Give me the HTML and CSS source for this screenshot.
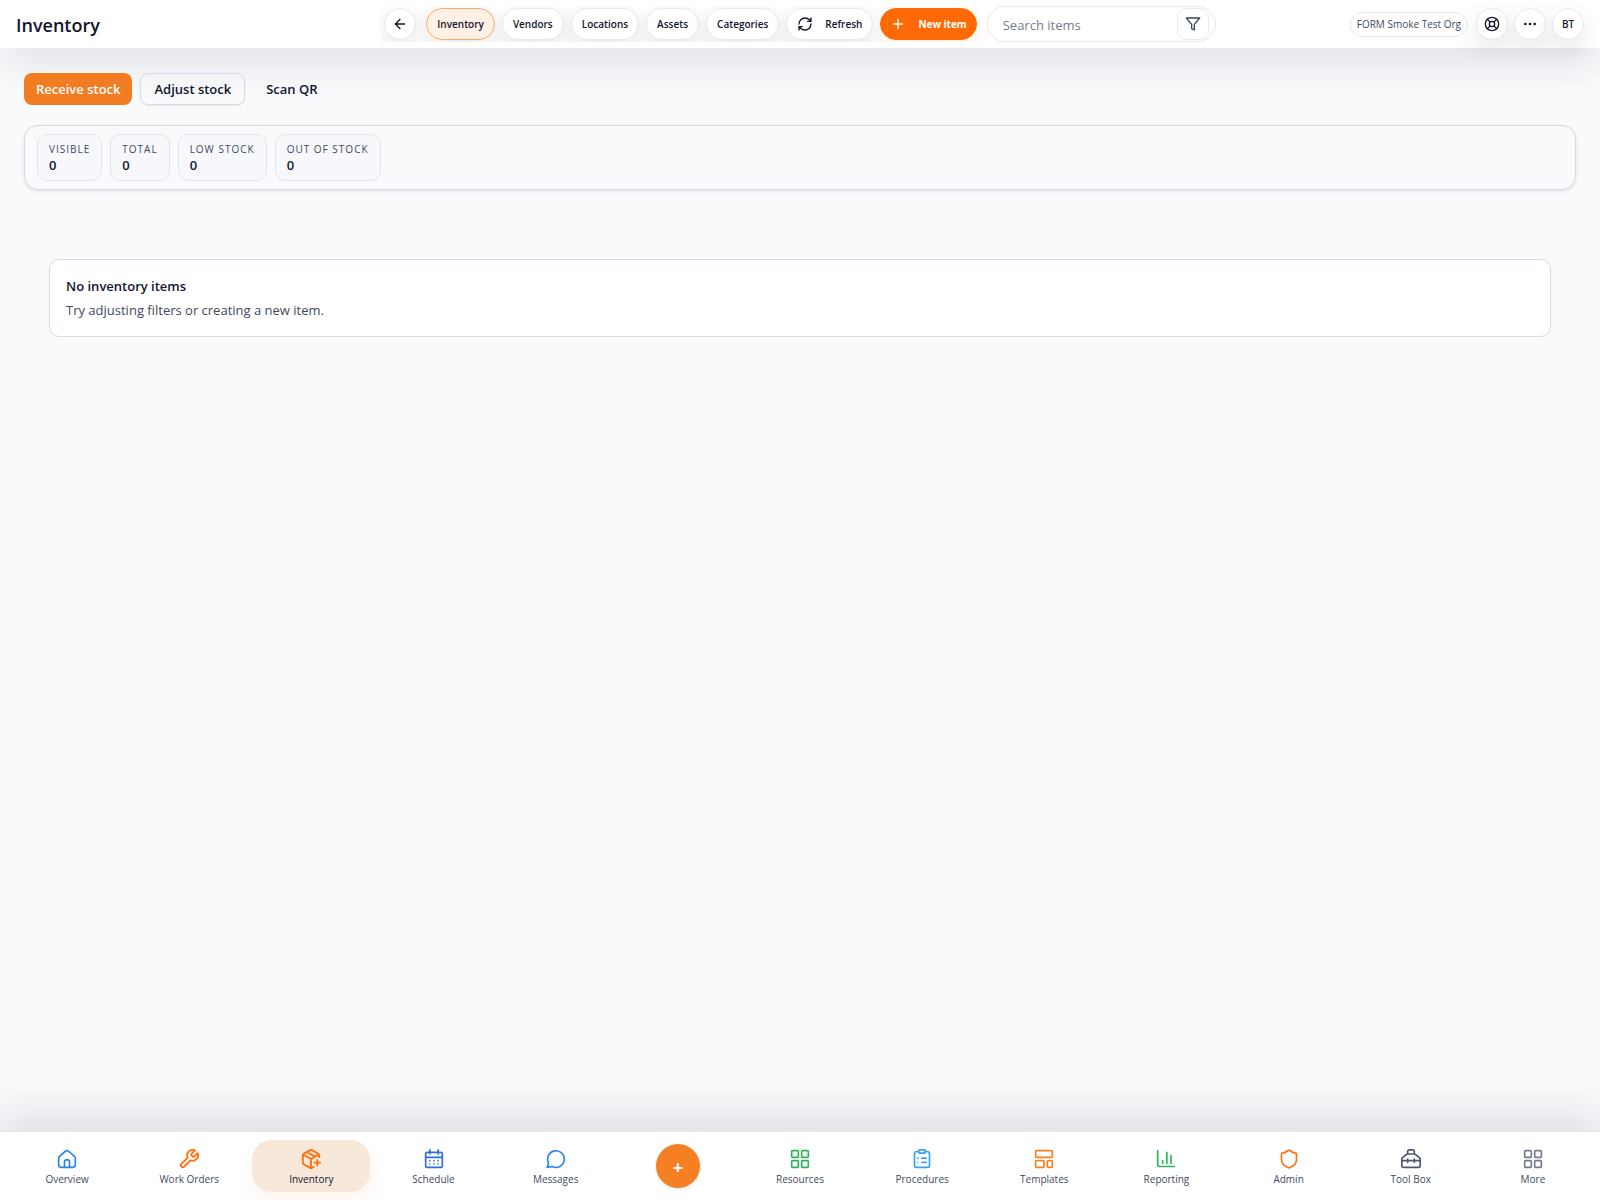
FILE: index.html
```html
<!DOCTYPE html>
<html lang="en">
<head>
<meta charset="utf-8">
<meta name="viewport" content="width=device-width, initial-scale=1">
<title>Inventory</title>
<link rel="stylesheet" href="styles.css">
</head>
<body>
<header class="topbar">
  <h1 class="topbar-title">Inventory</h1>
  <div class="toolbar">
    <button class="round back" type="button" aria-label="Back"><svg class="icon md" viewBox="0 0 24 24"><path d="m12 19-7-7 7-7M19 12H5"/></svg></button>
    <nav class="tabs" aria-label="Inventory sections">
      <a class="pill active" href="#inventory">Inventory</a>
      <a class="pill" href="#vendors">Vendors</a>
      <a class="pill" href="#locations">Locations</a>
      <a class="pill" href="#assets">Assets</a>
      <a class="pill" href="#categories">Categories</a>
      <button class="pill with-icon" type="button"><svg class="icon md" viewBox="0 0 24 24"><path d="M3 12a9 9 0 0 1 9-9 9.750 9.750 0 0 1 6.740 2.740L21 8M21 3v5h-5M21 12a9 9 0 0 1-9 9 9.750 9.750 0 0 1-6.740-2.740L3 16M8 16H3v5"/></svg>Refresh</button>
      <button class="pill with-icon primary" type="button"><svg class="icon md" viewBox="0 0 24 24"><path d="M5 12h14M12 5v14"/></svg>New item</button>
    </nav>
    <div class="search">
      <input class="search-input" type="search" placeholder="Search items" aria-label="Search items">
      <button class="filter" type="button" aria-label="Filter"><svg class="icon md" viewBox="0 0 24 24"><path d="M22 3H2l8 9.460V19l4 2v-8.540z"/></svg></button>
    </div>
  </div>
  <div class="account">
    <span class="org">FORM Smoke Test Org</span>
    <button class="round raised" type="button" aria-label="Help"><svg class="icon md" viewBox="0 0 24 24"><circle cx="12" cy="12" r="10"/><path d="m4.930 4.930 4.240 4.240M14.830 9.170l4.240-4.240M14.830 14.830l4.240 4.240M9.170 14.830l-4.240 4.240"/><circle cx="12" cy="12" r="4"/></svg></button>
    <button class="round raised" type="button" aria-label="More options"><svg class="icon md dots" viewBox="0 0 24 24"><circle cx="5" cy="12" r="1"/><circle cx="12" cy="12" r="1"/><circle cx="19" cy="12" r="1"/></svg></button>
    <button class="round raised" type="button">BT</button>
  </div>
</header>

<main class="content">
  <div class="actions">
    <button class="btn solid" type="button">Receive stock</button>
    <button class="btn outline" type="button">Adjust stock</button>
    <button class="btn" type="button">Scan QR</button>
  </div>
  <dl class="stats">
    <div class="stat"><dt>VISIBLE</dt><dd>0</dd></div>
    <div class="stat"><dt>TOTAL</dt><dd>0</dd></div>
    <div class="stat"><dt>LOW STOCK</dt><dd>0</dd></div>
    <div class="stat"><dt>OUT OF STOCK</dt><dd>0</dd></div>
  </dl>
  <section class="empty">
    <h2>No inventory items</h2>
    <p>Try adjusting filters or creating a new item.</p>
  </section>
</main>

<nav class="dock" aria-label="Main">
  <a class="dock-item" href="#overview"><svg class="icon lg sky" viewBox="0 0 24 24"><path d="M15 22v-7a2 2 0 0 0-2-2h-2a2 2 0 0 0-2 2v7"/><path d="M2 11a3 3 0 0 1 1-2.200l7-6.100a3 3 0 0 1 4 0l7 6.100a3 3 0 0 1 1 2.200v8a3 3 0 0 1-3 3H5a3 3 0 0 1-3-3z"/></svg><span>Overview</span></a>
  <a class="dock-item" href="#work-orders"><svg class="icon lg orange" viewBox="1 1 22 22"><path d="M14.700 6.300a1 1 0 0 0 0 1.400l1.600 1.600a1 1 0 0 0 1.400 0l3.770-3.770a6 6 0 0 1-7.940 7.940l-6.910 6.910a2.120 2.120 0 0 1-3-3l6.910-6.910a6 6 0 0 1 7.940-7.940l-3.760 3.760z"/></svg><span>Work Orders</span></a>
  <a class="dock-item current" href="#inventory" aria-current="page"><svg class="icon lg orange" viewBox="1 1 22 22"><path d="M16 16h6M19 13v6"/><path d="M21 10V8a2 2 0 0 0-1-1.730l-7-4a2 2 0 0 0-2 0l-7 4A2 2 0 0 0 3 8v8a2 2 0 0 0 1 1.730l7 4a2 2 0 0 0 2 0l2-1.140M7.500 4.270l9 5.150M3.290 7 12 12l8.710-5M12 22V12"/></svg><span>Inventory</span></a>
  <a class="dock-item" href="#schedule"><svg class="icon lg blue" viewBox="0 0 24 24"><path d="M7 1v5M17 1v5M2 10h20"/><rect x="2" y="4" width="20" height="18" rx="2"/><path d="M7 14h.010M12 14h.010M17 14h.010M7 18h.010M12 18h.010M17 18h.010"/></svg><span>Schedule</span></a>
  <a class="dock-item" href="#messages"><svg class="icon lg sky" viewBox="0 0 24 24"><path d="M7.400 21A10 10 0 1 0 3 16.500L1.500 22z"/></svg><span>Messages</span></a>
  <button class="fab" type="button" aria-label="Create">+</button>
  <a class="dock-item" href="#resources"><svg class="icon lg green" viewBox="0 0 24 24"><rect x="2" y="2" width="8" height="8" rx="1"/><rect x="14" y="2" width="8" height="8" rx="1"/><rect x="14" y="14" width="8" height="8" rx="1"/><rect x="2" y="14" width="8" height="8" rx="1"/></svg><span>Resources</span></a>
  <a class="dock-item" href="#procedures"><svg class="icon lg azure" viewBox="0 0 24 24"><rect x="8" y="1" width="8" height="4" rx="1"/><path d="M16 3h2a3 3 0 0 1 3 3v14a2 2 0 0 1-2 2H5a2 2 0 0 1-2-2V6a3 3 0 0 1 3-3h2M12 11h5M12 16h5M7 11h.010M7 16h.010"/></svg><span>Procedures</span></a>
  <a class="dock-item" href="#templates"><svg class="icon lg amber" viewBox="0 0 24 24"><rect x="2" y="2" width="20" height="8" rx="1"/><rect x="2" y="14" width="10" height="8" rx="1"/><rect x="16" y="14" width="6" height="8" rx="1"/></svg><span>Templates</span></a>
  <a class="dock-item" href="#reporting"><svg class="icon lg green" viewBox="0 0 24 24"><path d="M2 2v17a2 2 0 0 0 2 2h18M18 17V8M13 17V4M8 17v-3"/></svg><span>Reporting</span></a>
  <a class="dock-item" href="#admin"><svg class="icon lg orange" viewBox="0 0 24 24"><path d="M21 13c0 5-3.800 7.800-8.300 9.500a2 2 0 0 1-1.400 0C6.800 20.800 3 18 3 13V6a1 1 0 0 1 1-1c2.500 0 5-1.500 7-3.200a1.500 1.500 0 0 1 2 0C15 3.500 17.500 5 20 5a1 1 0 0 1 1 1z"/></svg><span>Admin</span></a>
  <a class="dock-item" href="#tool-box"><svg class="icon lg slate" viewBox="0 0 24 24"><path d="M16 12v4M8 12v4M1 14h22M16 6V3a2 2 0 0 0-2-2h-4a2 2 0 0 0-2 2v3"/><path d="M16 6a2 2 0 0 1 1.400.600l5 4A2 2 0 0 1 23 12v8a2 2 0 0 1-2 2H3a2 2 0 0 1-2-2v-8a2 2 0 0 1 .600-1.400l5-4A2 2 0 0 1 8 6z"/></svg><span>Tool Box</span></a>
  <a class="dock-item" href="#more"><svg class="icon lg gray" viewBox="0 0 24 24"><rect x="2" y="2" width="8" height="8" rx="1"/><rect x="14" y="2" width="8" height="8" rx="1"/><rect x="14" y="14" width="8" height="8" rx="1"/><rect x="2" y="14" width="8" height="8" rx="1"/></svg><span>More</span></a>
</nav>
</body>
</html>
```
FILE: styles.css
```css
* {
  box-sizing: border-box;
}

body {
  margin: 0;
  min-height: 100vh;
  display: flex;
  flex-direction: column;
  background: #f9fafc;
  color: #12152e;
  font-family: "Open Sans", "Noto Sans", sans-serif;
  font-size: 13px;
}

button,
input {
  font-family: inherit;
  color: inherit;
}

button {
  padding: 0;
  cursor: pointer;
}

a {
  color: inherit;
  text-decoration: none;
}

.icon {
  flex: none;
  fill: none;
  stroke: currentColor;
  stroke-width: 2;
  stroke-linecap: round;
  stroke-linejoin: round;
}

.md {
  width: 16px;
  height: 16px;
}

.lg {
  width: 20px;
  height: 20px;
}

.dots {
  fill: currentColor;
}

/* Top bar */
.topbar {
  display: grid;
  grid-template-columns: minmax(0, 1fr) auto minmax(0, 1fr);
  align-items: center;
  height: 48px;
  padding: 0 16px;
  background: #fff;
  box-shadow: 0 16px 44px -4px rgba(15, 23, 42, 0.12);
}

.topbar-title {
  margin: 0;
  padding-top: 2px;
  font-size: 18px;
  font-weight: 600;
  line-height: 24px;
}

.toolbar {
  display: flex;
  align-items: center;
  height: 36px;
  padding: 0 4px;
  overflow: hidden;
}

.tabs {
  display: flex;
  gap: 7px;
  margin: 0 10px;
}

.round {
  display: flex;
  align-items: center;
  justify-content: center;
  width: 32px;
  height: 32px;
  border: 1px solid #e6e9f0;
  border-radius: 16px;
  background: #fff;
  font-size: 10px;
  font-weight: 600;
}

.back {
  box-shadow: 0 6px 20px rgba(15, 23, 42, 0.1);
}

.raised {
  box-shadow: 0 10px 24px rgba(15, 23, 42, 0.1);
}

.pill {
  display: flex;
  align-items: center;
  height: 32px;
  padding: 0 10px;
  border: 1px solid #e6e9f0;
  border-radius: 16px;
  background: #fff;
  box-shadow: 0 6px 20px rgba(15, 23, 42, 0.1);
  font-size: 10px;
  font-weight: 600;
}

.pill.active {
  border-color: #f9ab66;
  background: #fff1e5;
}

.with-icon {
  gap: 12px;
}

.pill.primary {
  padding: 0 9px;
  border-color: #ff6a06;
  background: #ff6a06;
  box-shadow: 0 6px 20px rgba(255, 106, 6, 0.12);
  color: #fff;
  font-weight: 700;
}

.search {
  display: flex;
  align-items: center;
  justify-content: space-between;
  width: 229px;
  height: 36px;
  padding: 0 6px 0 5px;
  border: 1px solid #e6e9f0;
  border-radius: 18px;
  background: #fff;
}

.search-input {
  width: 176px;
  height: 32px;
  padding: 2px 10px 0;
  border: 0;
  background: none;
  font-size: 13px;
}

.search-input::placeholder {
  color: #757d8c;
}

.filter {
  display: flex;
  align-items: center;
  justify-content: center;
  width: 32px;
  height: 32px;
  border: 1px solid #e6e9f0;
  border-radius: 10px;
  background: #fff;
  color: #3d475c;
}

.account {
  display: flex;
  align-items: center;
  justify-content: flex-end;
  gap: 6px;
}

.org {
  height: 25px;
  margin-right: 2px;
  padding: 0 6px;
  border: 1px solid #e6e9f0;
  border-radius: 13px;
  color: #3f4a60;
  font-size: 10px;
  line-height: 23px;
  white-space: nowrap;
}

/* Page */
.content {
  flex: 1;
  padding: 25px 24px;
}

.actions {
  display: flex;
  gap: 8px;
}

.btn {
  height: 32px;
  padding: 0 12px;
  border: 1px solid transparent;
  border-radius: 8px;
  background: none;
  font-size: 13px;
  font-weight: 600;
}

.btn.solid {
  padding: 0 11px;
  background: #f27c21;
  color: #fff;
}

.btn.outline {
  padding: 0 13px;
  border-color: #d5dbe7;
  box-shadow: 0 1px 2px rgba(15, 23, 42, 0.08);
}

.stats {
  display: flex;
  gap: 8px;
  margin: 20px 0 0;
  padding: 8px 12px;
  border: 1px solid #d5d9e5;
  border-radius: 14px;
  box-shadow: 0 1px 3px rgba(15, 23, 42, 0.14);
}

.stat {
  height: 47px;
  padding: 6px 11px;
  border: 1px solid #e3e5ea;
  border-radius: 10px;
  background: #f7f8fc;
}

.stat dt {
  color: #3f4a60;
  font-size: 10px;
  font-weight: 500;
  letter-spacing: 1px;
  line-height: 16px;
}

.stat dd {
  margin: 0;
  font-size: 13px;
  font-weight: 600;
  line-height: 17px;
}

.empty {
  margin: 69px 25px 0;
  padding: 16px;
  border: 1px solid #d5dbe5;
  border-radius: 10px;
  background: #fff;
}

.empty h2 {
  margin: 0;
  font-size: 13px;
  font-weight: 600;
  line-height: 20px;
}

.empty p {
  margin: 4px 0 0;
  color: #3f4a60;
  line-height: 20px;
}

/* Bottom dock */
.dock {
  display: grid;
  grid-template-columns: repeat(13, minmax(0, 1fr));
  gap: 4px;
  height: 69px;
  padding: 8px;
  border-top: 1px solid #e6e8ec;
  background: #fff;
  box-shadow: 0 -16px 40px rgba(15, 23, 42, 0.12);
}

.dock-item {
  display: flex;
  flex-direction: column;
  align-items: center;
  gap: 4px;
  height: 52px;
  padding-top: 9px;
  border-radius: 20px;
  color: #3f4a60;
  font-size: 10px;
  line-height: 13px;
}

.dock-item.current {
  background: #f8e8da;
  color: #12152e;
  box-shadow: 0 8px 20px rgba(255, 106, 6, 0.08);
}

.fab {
  justify-self: center;
  width: 44px;
  height: 44px;
  margin-top: 4px;
  padding-top: 1px;
  border: 0;
  border-radius: 22px;
  background: #f57f22;
  box-shadow: 0 1px 3px rgba(15, 23, 42, 0.14);
  color: #fff;
  font-size: 18px;
  font-weight: 700;
}

.sky {
  stroke: #2785ea;
}

.blue {
  stroke: #2e6fe0;
}

.azure {
  stroke: #36a3ee;
}

.orange {
  stroke: #ff6f0f;
}

.amber {
  stroke: #f58220;
}

.green {
  stroke: #2cb459;
}

.slate {
  stroke: #4f5a70;
}

.gray {
  stroke: #737c8c;
}
```
